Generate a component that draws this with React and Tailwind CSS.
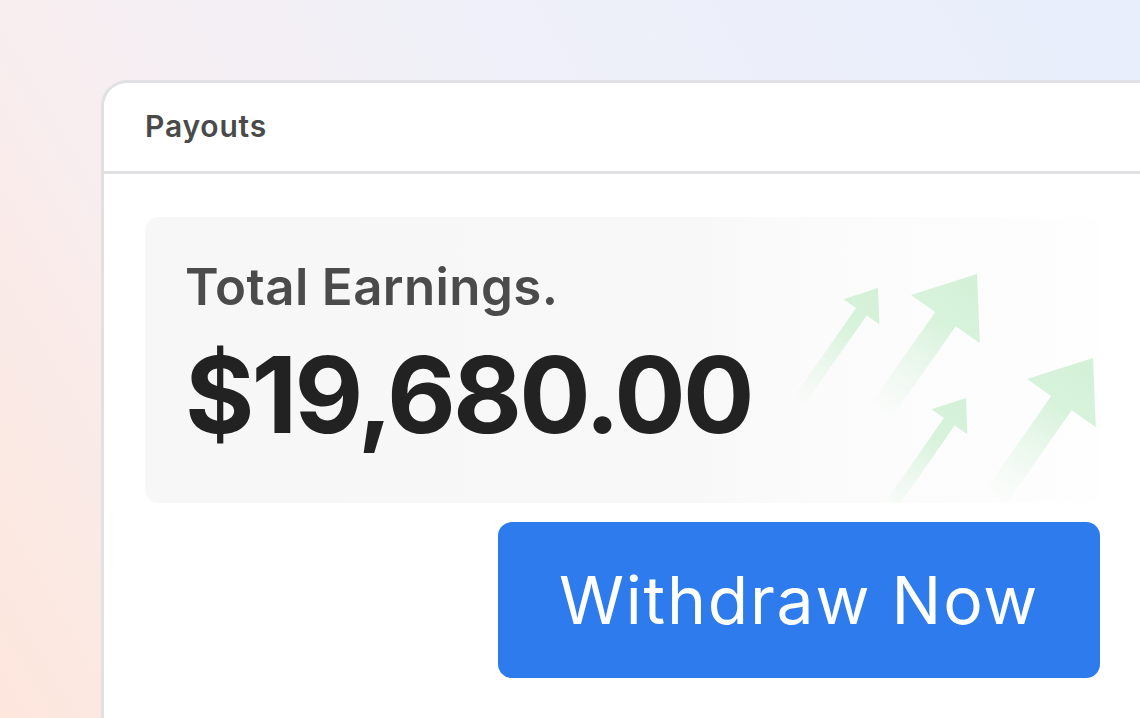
import React from 'react';

// one upward arrow, tip at (0,0), body pointing down in local coords
function Arrow({ x, y, big, id }) {
  const d = big
    ? 'M0 0 L42 55 L12.5 55 L12.5 175 L-12.5 175 L-12.5 55 L-42 55 Z'
    : 'M0 0 L22 29 L6.5 29 L6.5 145 L-6.5 145 L-6.5 29 L-22 29 Z';
  return (
    <g transform={`translate(${x} ${y}) rotate(35)`}>
      <path d={d} fill={`url(#${id})`} />
    </g>
  );
}

function GrowthArrows() {
  return (
    <svg className="absolute right-0 top-0" width="330" height="285" viewBox="0 0 330 285">
      <defs>
        <linearGradient id="gArrow" x1="0" y1="0" x2="0" y2="1">
          <stop offset="0%" stopColor="#d3f1d7" stopOpacity="1" />
          <stop offset="35%" stopColor="#d6f2da" stopOpacity="0.95" />
          <stop offset="100%" stopColor="#e6f6e8" stopOpacity="0" />
        </linearGradient>
      </defs>
      <Arrow x={108} y={71} id="gArrow" />
      <Arrow x={207} y={57} big id="gArrow" />
      <Arrow x={196} y={181} id="gArrow" />
      <Arrow x={323} y={141} big id="gArrow" />
    </svg>
  );
}

export default function App() {
  return (
    <div
      className="h-[718px] w-[1140px] overflow-hidden bg-[linear-gradient(60deg,#fde6dc_0%,#f7eef1_30%,#eff0f8_55%,#e8eefc_100%)] pl-[101px] pt-[80px]"
      style={{ fontFamily: 'Inter, "Noto Sans", sans-serif' }}
    >
      <div className="w-[1120px] h-[700px] rounded-tl-[26px] border-l-[3px] border-t-[3px] border-[#e1e1e4] bg-white">
        {/* Header */}
        <div className="flex h-[91px] items-center border-b-[3px] border-[#e1e1e4] pl-[41px] pb-[2px]">
          <span className="text-[30px] font-semibold tracking-[0.8px] text-[#4a4a4a]">Payouts</span>
        </div>

        {/* Body */}
        <div className="pl-[41px] pt-[43px]">
          <div className="relative h-[286px] w-[955px] rounded-[14px] bg-[linear-gradient(to_right,#f7f7f7_0%,#f8f8f8_58%,#fbfbfb_70%,#fefefe_100%)] pl-[40px] pt-[40px]">
            <div className="text-[51px] font-semibold leading-[60px] tracking-[0.4px] text-[#4b4b4b]">Total Earnings.</div>
            <div className="mt-[25px] text-[106px] font-bold leading-[106px] tracking-[-2.8px] text-[#222222]">$19,680.00</div>
            <GrowthArrows />
          </div>

          <div className="flex pl-[353px] pt-[19px]">
            <button className="flex h-[156px] w-[602px] items-center justify-center rounded-[14px] bg-[#2d7bec] text-[66px] font-normal tracking-[1.8px] text-white">
              Withdraw Now
            </button>
          </div>
        </div>
      </div>
    </div>
  );
}
